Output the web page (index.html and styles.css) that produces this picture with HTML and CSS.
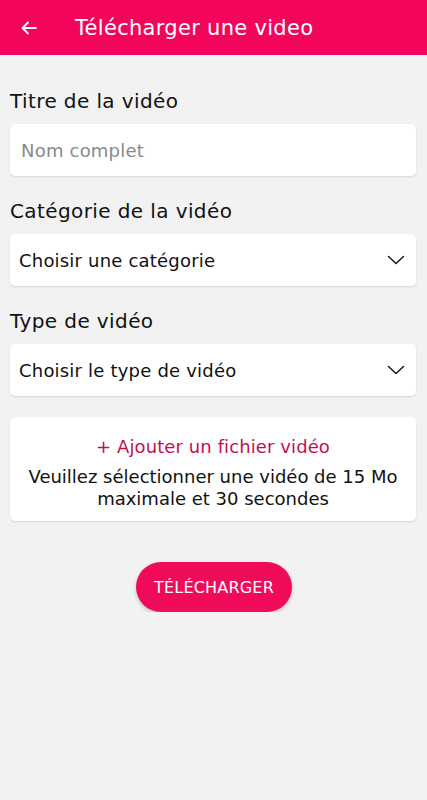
FILE: index.html
```html
<!DOCTYPE html>
<html lang="fr">

<head>
    <meta charset="UTF-8">
    <meta name="viewport" content="width=device-width, initial-scale=1.0">
    <title>Télécharger une video</title>
    <link rel="stylesheet" href="styles.css">
</head>

<body>
    <header class="topbar">
        <span class="back-btn">
            <svg width="16" height="14" viewBox="0 0 16 14" fill="none" stroke="#fff" stroke-width="1.8" stroke-linecap="round" stroke-linejoin="round">
                <path d="M15 7H1.5M7 1.5L1.5 7L7 12.5" />
            </svg>
        </span>
        <h1>Télécharger une video</h1>
    </header>

    <div class="content">
        <div class="field">
            <label>Titre de la vidéo</label>
            <div class="box placeholder">Nom complet</div>
        </div>

        <div class="field">
            <label>Catégorie de la vidéo</label>
            <div class="box select">
                <span>Choisir une catégorie</span>
                <svg class="chevron" width="18" height="10" viewBox="0 0 18 10" fill="none" stroke="#111" stroke-width="1.4" stroke-linecap="round" stroke-linejoin="round">
                    <path d="M1.5 1.5L9 8.5L16.5 1.5" />
                </svg>
            </div>
        </div>

        <div class="field">
            <label>Type de vidéo</label>
            <div class="box select">
                <span>Choisir le type de vidéo</span>
                <svg class="chevron" width="18" height="10" viewBox="0 0 18 10" fill="none" stroke="#111" stroke-width="1.4" stroke-linecap="round" stroke-linejoin="round">
                    <path d="M1.5 1.5L9 8.5L16.5 1.5" />
                </svg>
            </div>
        </div>

        <div class="upload-card">
            <div class="upload-title">+ Ajouter un fichier vidéo</div>
            <div class="upload-note">Veuillez sélectionner une vidéo de 15 Mo maximale et 30 secondes</div>
        </div>

        <div class="actions">
            <button class="submit-btn">TÉLÉCHARGER</button>
        </div>
    </div>
</body>

</html>
```

FILE: styles.css
```css
body {
    font-family: "DejaVu Sans", sans-serif;
    margin: 0;
    padding: 0;
    background-color: #f2f2f2;
    color: #111;
}

.topbar {
    height: 55px;
    background-color: #f2055b;
    display: flex;
    align-items: center;
    padding-left: 21px;
}

.back-btn {
    display: flex;
    width: 54px;
}

.topbar h1 {
    margin: 0;
    color: #fff;
    font-size: 21px;
    letter-spacing: 0.3px;
    font-weight: normal;
}

.content {
    padding: 33px 11px 0 10px;
}

.field {
    margin-bottom: 22px;
}

.field label {
    display: block;
    font-size: 20px;
    letter-spacing: 0.4px;
    line-height: 26px;
    margin-bottom: 10px;
}

.box {
    height: 52px;
    background-color: #fff;
    border-radius: 5px;
    box-shadow: 0 1px 2px rgba(0, 0, 0, 0.12);
    display: flex;
    align-items: center;
    padding: 0 11px 0 9px;
    font-size: 18px;
    letter-spacing: 0.2px;
}

.box.placeholder {
    color: #8a8a8a;
    padding-left: 11px;
}

.select {
    justify-content: space-between;
}

.upload-card {
    margin-top: -1px;
    background-color: #fff;
    border-radius: 5px;
    box-shadow: 0 1px 2px rgba(0, 0, 0, 0.12);
    padding: 17px 10px 11px;
    text-align: center;
}

.upload-title {
    color: #c4104f;
    font-size: 18px;
    letter-spacing: 0.1px;
    line-height: 26px;
    margin-bottom: 6px;
}

.upload-note {
    font-size: 18px;
    line-height: 22px;
}

.actions {
    display: flex;
    justify-content: center;
    padding-top: 41px;
    padding-left: 2px;
}

.submit-btn {
    width: 156px;
    height: 50px;
    border: none;
    border-radius: 25px;
    background-color: #ef0a5a;
    color: #fff;
    font-family: inherit;
    font-size: 16px;
    letter-spacing: 0.2px;
    box-shadow: 0 2px 4px rgba(0, 0, 0, 0.2);
}
```
